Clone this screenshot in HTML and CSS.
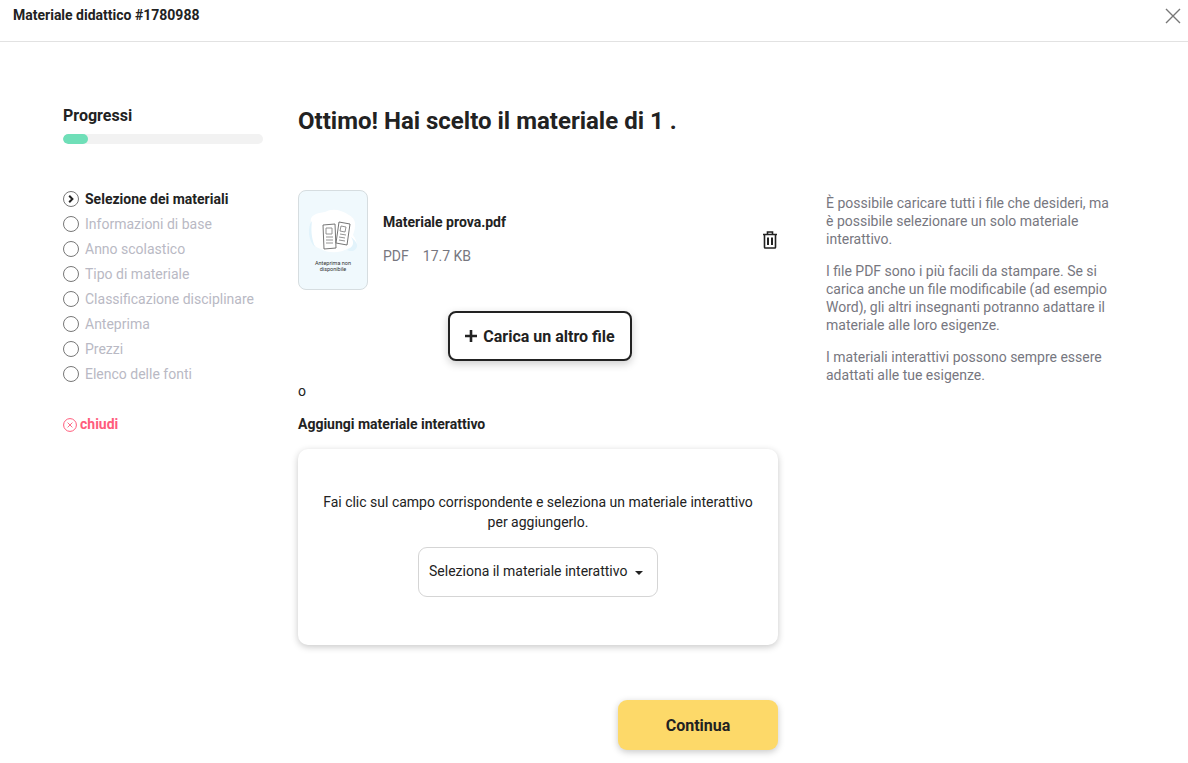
FILE: index.html
```html
<!DOCTYPE html>
<html lang="it">
<head>
<meta charset="utf-8">
<title>Materiale didattico</title>
<link rel="stylesheet" href="styles.css">
</head>
<body>
<header class="topbar">
  <span class="topbar-title">Materiale didattico #1780988</span>
  <svg class="close" width="16" height="16" viewBox="0 0 16 16"><path d="M1 1l14 14M15 1L1 15" stroke="#777" stroke-width="1.4" fill="none"/></svg>
</header>
<div class="layout">
  <nav class="side">
    <h2 class="side-title">Progressi</h2>
    <div class="bar"><div class="bar-fill"></div></div>
    <ul class="steps">
      <li class="step active">
        <svg width="16" height="16" viewBox="0 0 16 16"><circle cx="8" cy="8" r="7.5" fill="none" stroke="#777"/><path d="M6.2 4.8L9.4 8l-3.2 3.2" fill="none" stroke="#222" stroke-width="2"/></svg>
        Selezione dei materiali</li>
      <li class="step"><span class="dot"></span>Informazioni di base</li>
      <li class="step"><span class="dot"></span>Anno scolastico</li>
      <li class="step"><span class="dot"></span>Tipo di materiale</li>
      <li class="step"><span class="dot"></span>Classificazione disciplinare</li>
      <li class="step"><span class="dot"></span>Anteprima</li>
      <li class="step"><span class="dot"></span>Prezzi</li>
      <li class="step"><span class="dot"></span>Elenco delle fonti</li>
    </ul>
    <div class="quit">
      <svg width="14" height="14" viewBox="0 0 14 14"><circle cx="7" cy="7" r="6.4" fill="none" stroke="#ff5c7c"/><path d="M4.6 4.6l4.8 4.8M9.4 4.6l-4.8 4.8" stroke="#ff5c7c" stroke-width=".9"/></svg>
      chiudi
    </div>
  </nav>
  <main class="main">
    <h1 class="headline">Ottimo! Hai scelto il materiale di 1 .</h1>
    <div class="file">
      <div class="thumb">
        <svg width="68" height="98" viewBox="0 0 68 98">
          <path d="M12 32C10 24 18 22 26 21C34 17 42 19 50 24C58 28 57 36 54 44C60 52 58 58 50 57C42 62 30 63 22 58C14 56 10 48 12 40Z" fill="#fff"/>
          <path d="M13 30C8 36 9 50 16 56C12 46 12 38 13 30ZM52 46C57 50 62 56 54 60C52 60 50 60 48 59C54 56 56 52 52 46Z" fill="#e2f3fb"/>
          <g fill="#fff" stroke="#666" stroke-width=".9">
            <path d="M24 34l12-1 1 24-12 1z"/>
            <path d="M40 31l11 2-3 21-11-2z"/>
          </g>
          <g fill="none" stroke="#888" stroke-width=".9">
            <path d="M27 37h6v6h-6zM27 46h7M27 49h7M27 52h7"/>
            <path d="M42 35l5 1-1 5-5-1zM41 43l6 1M40 46l6 1M40 49l6 1"/>
          </g>
          <text class="thumb-text" x="34" y="74">Anteprima non</text>
          <text class="thumb-text" x="34" y="80">disponibile</text>
        </svg>
      </div>
      <div class="file-info">
        <div class="file-name">Materiale prova.pdf</div>
        <div class="file-meta"><span>PDF</span><span>17.7 KB</span></div>
      </div>
      <svg class="trash" width="16" height="18" viewBox="0 0 16 18"><path d="M1 3.5h14M5.5 3V1h5v2M2.5 4v12.2c0 .5.4.8.8.8h9.4c.4 0 .8-.3.8-.8V4" fill="none" stroke="#222" stroke-width="1.6"/><path d="M6 6.5v7.5M10 6.5v7.5" stroke="#222" stroke-width="2"/></svg>
    </div>
    <div class="upload-row">
      <button class="upload">
        <svg width="12" height="12" viewBox="0 0 12 12"><path d="M6 0v12M0 6h12" stroke="#222" stroke-width="2.6"/></svg>
        Carica un altro file
      </button>
    </div>
    <p class="or">o</p>
    <h3 class="sub">Aggiungi materiale interattivo</h3>
    <section class="card">
      <p class="card-text">Fai clic sul campo corrispondente e seleziona un materiale interattivo per aggiungerlo.</p>
      <div class="select">Seleziona il materiale interattivo<span class="caret"></span></div>
    </section>
    <div class="actions"><button class="next">Continua</button></div>
  </main>
  <aside class="help">
    <p>È possibile caricare tutti i file che desideri, ma è possibile selezionare un solo materiale interattivo.</p>
    <p>I file PDF sono i più facili da stampare. Se si carica anche un file modificabile (ad esempio Word), gli altri insegnanti potranno adattare il materiale alle loro esigenze.</p>
    <p>I materiali interattivi possono sempre essere adattati alle tue esigenze.</p>
  </aside>
</div>
</body>
</html>
```
FILE: styles.css
```css
* { box-sizing: border-box; }
html, body { margin: 0; padding: 0; }
body { font-family: Roboto, "Liberation Sans", sans-serif; font-size: 14px; color: #222; background: #fff; height: 763px; overflow: hidden; }
.topbar { height: 42px; border-bottom: 1px solid #e2e2e2; padding: 7px 7px 0 13px; display: flex; justify-content: space-between; align-items: flex-start; }
.topbar-title { font-weight: 700; font-size: 14px; line-height: 16px; }
.close { margin-top: 1px; }
.layout { display: flex; padding: 64px 0 0 63px; }
.side { width: 200px; margin-right: 35px; flex: none; }
.side-title { margin: 0; font-size: 16px; font-weight: 700; line-height: 20px; }
.bar { height: 10px; margin-top: 8px; background: #f2f2f2; border-radius: 5px; overflow: hidden; }
.bar-fill { width: 25px; height: 10px; background: #6fdfb8; border-radius: 5px; }
.steps { list-style: none; margin: 42px 0 0; padding: 0; }
.step { display: flex; align-items: center; gap: 6px; height: 25px; color: #b9b9c4; font-size: 14px; white-space: nowrap; }
.step.active { color: #222; font-weight: 700; }
.dot { width: 16px; height: 16px; border: 1px solid #777; border-radius: 50%; flex: none; }
.quit { display: flex; align-items: center; gap: 3px; margin-top: 25px; height: 25px; color: #ff5c7c; font-weight: 700; font-size: 14px; }
.quit svg { margin-top: 2px; }
.main { width: 480px; flex: none; }
.headline { margin: 0; font-size: 24px; font-weight: 700; line-height: 30px; }
.file { display: flex; align-items: flex-start; margin-top: 54px; height: 100px; position: relative; }
.thumb { width: 70px; height: 100px; background: #f0f9fd; border: 1px solid #d6dde0; border-radius: 8px; flex: none; }
.thumb svg { display: block; }
.thumb-text { font-family: Roboto, sans-serif; font-size: 5.5px; text-anchor: middle; fill: #333; }
.file-info { margin-left: 15px; flex: 1; }
.file-name { font-weight: 700; line-height: 16px; margin-top: 24px; }
.file-meta { display: flex; gap: 14px; margin-top: 18px; line-height: 16px; color: #77777f; }
.trash { margin-top: 41px; margin-right: 0; }
.upload-row { display: flex; justify-content: center; margin-top: 21px; padding-left: 4px; }
.upload { width: 184px; height: 50px; background: #fff; border: 2px solid #222; border-radius: 8px; font: 700 16px Roboto, sans-serif; color: #222; box-shadow: 0 3px 8px rgba(0,0,0,.2); display: flex; align-items: center; justify-content: center; gap: 6px; padding: 0; }
.or { margin: 22px 0 0; line-height: 16px; }
.sub { margin: 17px 0 0; font-size: 14px; font-weight: 700; line-height: 16px; }
.card { margin-top: 17px; height: 196px; background: #fff; border-radius: 10px; box-shadow: 0 2px 7px rgba(0,0,0,.22); padding: 43px 20px 0; display: flex; flex-direction: column; align-items: center; }
.card-text { margin: 0; text-align: center; line-height: 20px; }
.select { width: 240px; height: 50px; margin-top: 15px; border: 1px solid #d5d5d5; border-radius: 9px; display: flex; align-items: center; padding-left: 10px; padding-bottom: 2px; white-space: nowrap; }
.caret { width: 0; height: 0; margin-left: 8px; margin-top: 4px; border-left: 4px solid transparent; border-right: 4px solid transparent; border-top: 4px solid #222; }
.actions { display: flex; justify-content: flex-end; margin-top: 55px; }
.next { width: 160px; height: 50px; background: #fdd969; border: 0; border-radius: 9px; font: 700 16px Roboto, sans-serif; color: #222; box-shadow: 0 2px 7px rgba(0,0,0,.22); }
.help { margin-left: 48px; margin-top: 88px; width: 284px; color: #77777f; line-height: 18px; }
.help p { margin: 0 0 14px; }
```
